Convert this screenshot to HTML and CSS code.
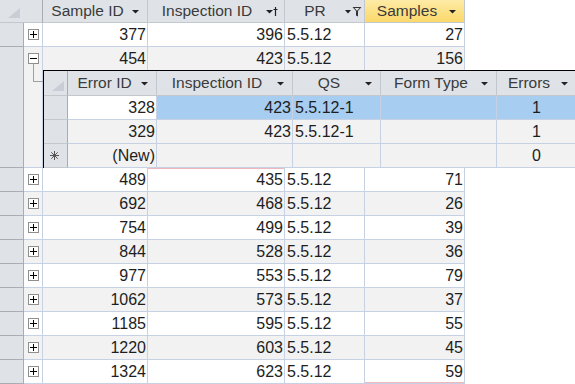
FILE: index.html
```html
<!DOCTYPE html>
<html lang="en">
<head>
  <meta charset="UTF-8" />
  <title>Samples</title>
  <link rel="stylesheet" href="styles.css">
</head>
<body>

  <div class="sheet">
    <!-- cabecalho -->
    <div class="hrow">
      <div class="hc corner">
        <svg class="tri" width="12" height="10" viewBox="0 0 12 10"><path d="M0 10L12 0V10Z" fill="#c9ced6"/></svg>
      </div>
      <div class="hc c-sid"><span class="ht">Sample ID</span>
        <span class="hi"><svg width="7" height="5" viewBox="0 0 7 5"><path d="M0 1H7L3.5 4.5Z" fill="#222"/></svg></span></div>
      <div class="hc c-iid"><span class="ht">Inspection ID</span>
        <span class="hi sm"><svg width="12" height="11" viewBox="0 0 12 11"><path d="M0 4H7L3.5 7.5Z" fill="#222"/><path d="M9.5 1V10M7.5 3.5H11.5" stroke="#222" stroke-width="1.2"/></svg></span></div>
      <div class="hc c-pr"><span class="ht">PR</span>
        <span class="hi fl"><svg width="17" height="11" viewBox="0 0 17 11"><path d="M0 4H6L3 7.5Z" fill="#222"/><path d="M7.5 1H16.5L13 5V10.5L11 9.5V5Z" fill="#333"/><path d="M9.5 2H14.5L12.3 4.5H11.7Z" fill="#dfe3e8"/></svg></span></div>
      <div class="hc c-sam sorted"><span class="ht">Samples</span>
        <span class="hi"><svg width="7" height="5" viewBox="0 0 7 5"><path d="M0 1H7L3.5 4.5Z" fill="#222"/></svg></span></div>
    </div>

    <div class="row">
      <div class="sel"></div>
      <div class="exp"><svg class="box" width="11" height="11" viewBox="0 0 11 11"><rect x="0.5" y="0.5" width="10" height="10" fill="#fff" stroke="#8f8f8f"/><path d="M2 5.5H9M5.5 2V9" stroke="#000"/></svg></div>
      <div class="cell num c-sid">377</div>
      <div class="cell num c-iid">396</div>
      <div class="cell txt c-pr">5.5.12</div>
      <div class="cell num c-sam">27</div>
    </div>

    <!-- linha expandida com subfolha -->
    <div class="row open alt">
      <div class="sel tall"></div>
      <div class="exp tall">
        <svg class="box" width="11" height="11" viewBox="0 0 11 11"><rect x="0.5" y="0.5" width="10" height="10" fill="#fff" stroke="#8f8f8f"/><path d="M2 5.5H9" stroke="#000"/></svg>
        <div class="tree"></div>
      </div>
      <div class="open-right">
        <div class="top">
          <div class="cell num c-sid">454</div>
          <div class="cell num c-iid">423</div>
          <div class="cell txt c-pr">5.5.12</div>
          <div class="cell num c-sam">156</div>
        </div>
        <div class="sub">
          <div class="shrow">
            <div class="hc s-sel">
              <svg class="tri" width="12" height="10" viewBox="0 0 12 10"><path d="M0 10L12 0V10Z" fill="#c9ced6"/></svg>
            </div>
            <div class="hc s-eid"><span class="ht">Error ID</span>
              <span class="hi"><svg width="7" height="5" viewBox="0 0 7 5"><path d="M0 1H7L3.5 4.5Z" fill="#222"/></svg></span></div>
            <div class="hc s-iid"><span class="ht">Inspection ID</span>
              <span class="hi"><svg width="7" height="5" viewBox="0 0 7 5"><path d="M0 1H7L3.5 4.5Z" fill="#222"/></svg></span></div>
            <div class="hc s-qs"><span class="ht">QS</span>
              <span class="hi"><svg width="7" height="5" viewBox="0 0 7 5"><path d="M0 1H7L3.5 4.5Z" fill="#222"/></svg></span></div>
            <div class="hc s-ft"><span class="ht">Form Type</span>
              <span class="hi"><svg width="7" height="5" viewBox="0 0 7 5"><path d="M0 1H7L3.5 4.5Z" fill="#222"/></svg></span></div>
            <div class="hc s-err"><span class="ht">Errors</span>
              <span class="hi"><svg width="7" height="5" viewBox="0 0 7 5"><path d="M0 1H7L3.5 4.5Z" fill="#222"/></svg></span></div>
          </div>
          <div class="srow current">
            <div class="ssel"></div>
            <div class="cell num s-eid focus">328</div>
            <div class="cell num s-iid">423</div>
            <div class="cell txt s-qs">5.5.12-1</div>
            <div class="cell txt s-ft"></div>
            <div class="cell mid s-err">1</div>
          </div>
          <div class="srow alt2">
            <div class="ssel"></div>
            <div class="cell num s-eid">329</div>
            <div class="cell num s-iid">423</div>
            <div class="cell txt s-qs">5.5.12-1</div>
            <div class="cell txt s-ft"></div>
            <div class="cell mid s-err">1</div>
          </div>
          <div class="srow">
            <div class="ssel star"><svg width="9" height="9" viewBox="0 0 9 9"><path d="M4.5 0V9M0 4.5H9M1.3 1.3L7.7 7.7M7.7 1.3L1.3 7.7" stroke="#555"/></svg></div>
            <div class="cell num s-eid">(New)</div>
            <div class="cell num s-iid"></div>
            <div class="cell txt s-qs"></div>
            <div class="cell txt s-ft"></div>
            <div class="cell mid s-err">0</div>
          </div>
        </div>
      </div>
    </div>

    <div id="rows"></div>
  </div>

  <script>
    const dados = [
      [489, 435, 71], [692, 468, 26], [754, 499, 39], [844, 528, 36], [977, 553, 79],
      [1062, 573, 37], [1185, 595, 55], [1220, 603, 45], [1324, 623, 59]
    ];
    const plus = '<svg class="box" width="11" height="11" viewBox="0 0 11 11"><rect x="0.5" y="0.5" width="10" height="10" fill="#fff" stroke="#8f8f8f"/><path d="M2 5.5H9M5.5 2V9" stroke="#000"/></svg>';
    const container = document.getElementById('rows');
    dados.forEach((d, i) => {
      let extraIid = i === 0 ? ' pink-top' : '';
      let extraSam = i === dados.length - 1 ? ' pink-bottom' : '';
      container.innerHTML += `
        <div class="row${i % 2 ? ' alt' : ''}">
          <div class="sel"></div>
          <div class="exp">${plus}</div>
          <div class="cell num c-sid">${d[0]}</div>
          <div class="cell num c-iid${extraIid}">${d[1]}</div>
          <div class="cell txt c-pr">5.5.12</div>
          <div class="cell num c-sam${extraSam}">${d[2]}</div>
        </div>
      `;
    });
  </script>

</body>
</html>
```

FILE: styles.css
```css
body {
  margin: 0;
  background: #ffffff;
  font-family: 'Liberation Sans', Arial, sans-serif;
}
.sheet {
  width: 575px;
  height: 384px;
  overflow: hidden;
  font-size: 15.5px;
  color: #1e1e1e;
}

/* cabecalho */
.hrow, .shrow {
  display: flex;
  height: 23px;
}
.shrow {
  height: 25px;
}
.hc {
  box-sizing: border-box;
  flex: none;
  display: flex;
  align-items: center;
  height: 100%;
  background: #dfe3e8;
  border-right: 1px solid #c3c8cf;
  border-bottom: 1px solid #c3c8cf;
  color: #3a3a3a;
  white-space: nowrap;
}
.hc .ht {
  flex: 1;
  text-align: center;
}
.hc .hi {
  flex: none;
  display: flex;
  margin-right: 8px;
}
.hc .hi.sm {
  margin-right: 6px;
}
.hc .hi.fl {
  margin-right: 2px;
}
.hc.sorted {
  background: linear-gradient(#fdeba6, #fbd86a);
}
.corner {
  width: 43px;
  border-right-color: #a9adb3;
}
.tri {
  margin: 0 0 0 8px;
  align-self: flex-end;
  margin-bottom: 4px;
}

/* colunas */
.c-sid { width: 105px; }
.c-iid { width: 137px; }
.c-pr { width: 80px; }
.c-sam { width: 100px; }
.s-sel { width: 24px; border-right-color: #a9adb3; }
.s-eid { width: 89px; }
.s-iid { width: 136px; }
.s-qs { width: 88px; }
.s-ft { width: 116px; }
.s-err { width: 80px; }

/* linhas */
.row, .srow, .top {
  display: flex;
  height: 24px;
}
.top {
  height: 23px;
}
.cell {
  box-sizing: border-box;
  flex: none;
  display: flex;
  align-items: center;
  height: 100%;
  background: #ffffff;
  border-right: 1px solid #c6d2e4;
  border-bottom: 1px solid #c6d2e4;
  font-size: 16px;
  white-space: nowrap;
}
.top .cell {
  border-bottom: none;
}
.num {
  justify-content: flex-end;
  padding-right: 1px;
}
.txt {
  padding-left: 2px;
}
.mid {
  justify-content: center;
}
.alt .cell, .alt .exp, .alt2 .cell {
  background: #f2f2f2;
}
.current .cell {
  background: #a7cdf0;
}
.current .cell.focus {
  background: #ffffff;
}
.pink-top {
  box-shadow: inset 0 1px 0 #f2b6bf;
}
.pink-bottom {
  box-shadow: inset 0 -1px 0 #f2b6bf;
}

.sel {
  box-sizing: border-box;
  flex: none;
  width: 24px;
  height: 100%;
  background: #dfe3e8;
  border-right: 1px solid #a9adb3;
  border-bottom: 1px solid #a9adb3;
}
.exp {
  box-sizing: border-box;
  flex: none;
  width: 19px;
  height: 100%;
  padding: 6px 0 0 4px;
  background: #ffffff;
  border-right: 1px solid #c6d2e4;
  border-bottom: 1px solid #c6d2e4;
}
.box {
  display: block;
}
.sel.tall, .exp.tall {
  height: 121px;
}
.tree {
  width: 9px;
  height: 17px;
  margin-left: 5px;
  border-left: 1px solid #a0a0a0;
  border-bottom: 1px solid #a0a0a0;
}
.open {
  height: auto;
}
.open-right {
  display: flex;
  flex-direction: column;
}

/* subfolha */
.sub {
  width: 560px;
  border-top: 1px solid #000000;
  border-left: 1px solid #000000;
}
.ssel {
  box-sizing: border-box;
  flex: none;
  width: 24px;
  height: 100%;
  background: #dfe3e8;
  border-right: 1px solid #a9adb3;
  border-bottom: 1px solid #c3c8cf;
}
.ssel.star {
  display: flex;
  align-items: center;
  padding-left: 6px;
}
```
